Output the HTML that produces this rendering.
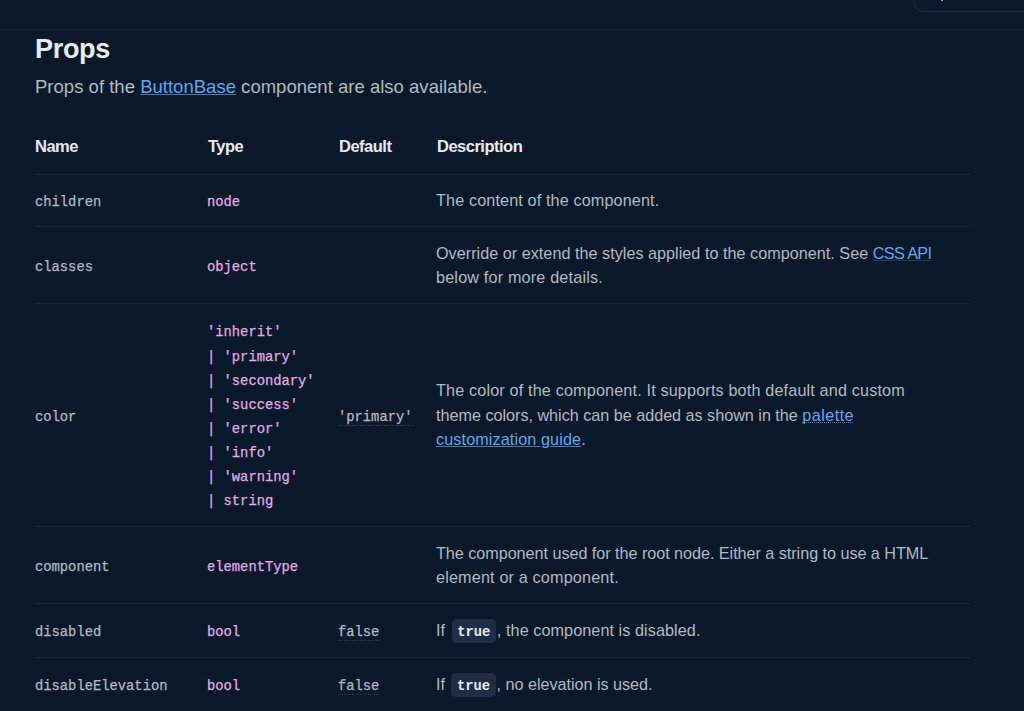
<!DOCTYPE html>
<html><head><meta charset="utf-8"><title>Props</title>
<style>
html,body{margin:0;padding:0;}
body{width:1024px;height:711px;overflow:hidden;background:#0A1929;position:relative;font-family:"Liberation Sans",sans-serif;}
.t{position:absolute;white-space:nowrap;}
.hr{position:absolute;left:35px;width:935px;height:1px;background:#172536;}
.topline{position:absolute;left:0;top:29px;width:1024px;height:1px;background:#142233;}
.box{position:absolute;left:913px;top:-41px;width:200px;height:51px;border:1px solid #1E2C3C;border-radius:11px;}
.bdot{position:absolute;left:941px;top:0;width:2px;height:1px;background:#66B2FF;}
.lk{color:#5EA8F2;text-decoration:underline;text-decoration-color:rgba(94,168,242,0.7);text-underline-offset:1px;}
.dim{text-decoration-color:rgba(160,190,230,0.2);}
.dotl{text-decoration:none;background-image:repeating-linear-gradient(90deg,rgba(94,168,242,0.65) 0 1px,transparent 1px 2px);background-repeat:no-repeat;background-size:100% 1px;background-position:0 16px;}
.dot{border-bottom:1px dotted rgba(178,186,194,0.24);}
.chip{display:inline-block;font-family:"Liberation Mono",monospace;font-weight:700;font-size:13.8px;color:#E7EBF0;background:#1F2E44;border-radius:5px;padding:4px 5.5px 0 5.5px;line-height:20px;height:20px;vertical-align:baseline;margin:0 1px 0 2px;letter-spacing:0;}
</style></head><body>
<div class="topline"></div>
<div class="box"></div><div class="bdot"></div>
<div class="hr" style="top:174px"></div><div class="hr" style="top:226px"></div><div class="hr" style="top:303px"></div><div class="hr" style="top:526px"></div><div class="hr" style="top:603px"></div><div class="hr" style="top:657px"></div>
<div class="t" style="left:35px;top:29px;font-size:27px;line-height:40px;color:#E7EBF0;font-family:'Liberation Sans', sans-serif;font-weight:700;letter-spacing:-0.3px;">Props</div><div class="t" style="left:35px;top:73px;font-size:18.5px;line-height:28px;color:#B2BAC2;font-family:'Liberation Sans', sans-serif;font-weight:400;letter-spacing:0.0173px;">Props of the <span class="lk">ButtonBase</span> component are also available.</div><div class="t" style="left:35px;top:134px;font-size:16.5px;line-height:25px;color:#E7EBF0;font-family:'Liberation Sans', sans-serif;font-weight:700;letter-spacing:-0.5px;">Name</div><div class="t" style="left:208px;top:134px;font-size:16.5px;line-height:25px;color:#E7EBF0;font-family:'Liberation Sans', sans-serif;font-weight:700;letter-spacing:-0.5px;">Type</div><div class="t" style="left:339px;top:134px;font-size:16.5px;line-height:25px;color:#E7EBF0;font-family:'Liberation Sans', sans-serif;font-weight:700;letter-spacing:-0.5px;">Default</div><div class="t" style="left:437px;top:134px;font-size:16.5px;line-height:25px;color:#E7EBF0;font-family:'Liberation Sans', sans-serif;font-weight:700;letter-spacing:-0.5px;">Description</div><div class="t" style="left:35px;top:192px;font-size:13.8px;line-height:21px;color:#B2BAC2;font-family:'Liberation Mono', monospace;font-weight:400;-webkit-text-stroke:0.25px;">children</div><div class="t" style="left:207px;top:192px;font-size:13.8px;line-height:21px;color:#E3ACE6;font-family:'Liberation Mono', monospace;font-weight:400;-webkit-text-stroke:0.25px;">node</div><div class="t" style="left:436px;top:188px;font-size:16.2px;line-height:24px;color:#B2BAC2;font-family:'Liberation Sans', sans-serif;font-weight:400;letter-spacing:0.1286px;">The content of the component.</div><div class="t" style="left:35px;top:257px;font-size:13.8px;line-height:21px;color:#B2BAC2;font-family:'Liberation Mono', monospace;font-weight:400;-webkit-text-stroke:0.25px;">classes</div><div class="t" style="left:207px;top:257px;font-size:13.8px;line-height:21px;color:#E3ACE6;font-family:'Liberation Mono', monospace;font-weight:400;-webkit-text-stroke:0.25px;">object</div><div class="t" style="left:436px;top:241px;font-size:16.2px;line-height:24px;color:#B2BAC2;font-family:'Liberation Sans', sans-serif;font-weight:400;letter-spacing:0.0205px;">Override or extend the styles applied to the component. See <span class="lk dim" style="letter-spacing:-0.62px">CSS API</span></div><div class="t" style="left:436px;top:265px;font-size:16.2px;line-height:24px;color:#B2BAC2;font-family:'Liberation Sans', sans-serif;font-weight:400;letter-spacing:0.1759px;">below for more details.</div><div class="t" style="left:35px;top:407px;font-size:13.8px;line-height:21px;color:#B2BAC2;font-family:'Liberation Mono', monospace;font-weight:400;-webkit-text-stroke:0.25px;">color</div><div class="t" style="left:207px;top:322px;font-size:13.8px;line-height:21px;color:#E3ACE6;font-family:'Liberation Mono', monospace;font-weight:400;-webkit-text-stroke:0.25px;">'inherit'</div><div class="t" style="left:207px;top:346.5px;font-size:13.8px;line-height:21px;color:#E3ACE6;font-family:'Liberation Mono', monospace;font-weight:400;-webkit-text-stroke:0.25px;">|&nbsp;'primary'</div><div class="t" style="left:207px;top:370.6px;font-size:13.8px;line-height:21px;color:#E3ACE6;font-family:'Liberation Mono', monospace;font-weight:400;-webkit-text-stroke:0.25px;">|&nbsp;'secondary'</div><div class="t" style="left:207px;top:394.6px;font-size:13.8px;line-height:21px;color:#E3ACE6;font-family:'Liberation Mono', monospace;font-weight:400;-webkit-text-stroke:0.25px;">|&nbsp;'success'</div><div class="t" style="left:207px;top:419px;font-size:13.8px;line-height:21px;color:#E3ACE6;font-family:'Liberation Mono', monospace;font-weight:400;-webkit-text-stroke:0.25px;">|&nbsp;'error'</div><div class="t" style="left:207px;top:443px;font-size:13.8px;line-height:21px;color:#E3ACE6;font-family:'Liberation Mono', monospace;font-weight:400;-webkit-text-stroke:0.25px;">|&nbsp;'info'</div><div class="t" style="left:207px;top:467px;font-size:13.8px;line-height:21px;color:#E3ACE6;font-family:'Liberation Mono', monospace;font-weight:400;-webkit-text-stroke:0.25px;">|&nbsp;'warning'</div><div class="t" style="left:207px;top:491px;font-size:13.8px;line-height:21px;color:#E3ACE6;font-family:'Liberation Mono', monospace;font-weight:400;-webkit-text-stroke:0.25px;">|&nbsp;string</div><div class="t" style="left:338px;top:406.6px;font-size:13.8px;line-height:21px;color:#B2BAC2;font-family:'Liberation Mono', monospace;font-weight:400;-webkit-text-stroke:0.25px;"><span class="dot">'primary'</span></div><div class="t" style="left:436px;top:377.5px;font-size:16.2px;line-height:24px;color:#B2BAC2;font-family:'Liberation Sans', sans-serif;font-weight:400;letter-spacing:0.1582px;">The color of the component. It supports both default and custom</div><div class="t" style="left:436px;top:403px;font-size:16.2px;line-height:24px;color:#B2BAC2;font-family:'Liberation Sans', sans-serif;font-weight:400;letter-spacing:-0.0174px;">theme colors, which can be added as shown in the <span class="lk dotl" style="letter-spacing:0.45px">palette</span></div><div class="t" style="left:436px;top:426.5px;font-size:16.2px;line-height:24px;color:#B2BAC2;font-family:'Liberation Sans', sans-serif;font-weight:400;letter-spacing:0.8763px;"><span class="lk" style="letter-spacing:0.11px">customization guide</span>.</div><div class="t" style="left:35px;top:557px;font-size:13.8px;line-height:21px;color:#B2BAC2;font-family:'Liberation Mono', monospace;font-weight:400;-webkit-text-stroke:0.25px;">component</div><div class="t" style="left:207px;top:557px;font-size:13.8px;line-height:21px;color:#E3ACE6;font-family:'Liberation Mono', monospace;font-weight:400;-webkit-text-stroke:0.25px;">elementType</div><div class="t" style="left:436px;top:540.6px;font-size:16.2px;line-height:24px;color:#B2BAC2;font-family:'Liberation Sans', sans-serif;font-weight:400;letter-spacing:-0.0403px;">The component used for the root node. Either a string to use a HTML</div><div class="t" style="left:436px;top:564.6px;font-size:16.2px;line-height:24px;color:#B2BAC2;font-family:'Liberation Sans', sans-serif;font-weight:400;letter-spacing:0.1636px;">element or a component.</div><div class="t" style="left:35px;top:622px;font-size:13.8px;line-height:21px;color:#B2BAC2;font-family:'Liberation Mono', monospace;font-weight:400;-webkit-text-stroke:0.25px;">disabled</div><div class="t" style="left:207px;top:622px;font-size:13.8px;line-height:21px;color:#E3ACE6;font-family:'Liberation Mono', monospace;font-weight:400;-webkit-text-stroke:0.25px;">bool</div><div class="t" style="left:338px;top:622px;font-size:13.8px;line-height:21px;color:#B2BAC2;font-family:'Liberation Mono', monospace;font-weight:400;-webkit-text-stroke:0.25px;"><span class="dot">false</span></div><div class="t" style="left:436px;top:618px;font-size:16.2px;line-height:24px;color:#B2BAC2;font-family:'Liberation Sans', sans-serif;font-weight:400;letter-spacing:0.0733px;">If <span class="chip">true</span>, the component is disabled.</div><div class="t" style="left:35px;top:675.5px;font-size:13.8px;line-height:21px;color:#B2BAC2;font-family:'Liberation Mono', monospace;font-weight:400;-webkit-text-stroke:0.25px;">disableElevation</div><div class="t" style="left:207px;top:675.5px;font-size:13.8px;line-height:21px;color:#E3ACE6;font-family:'Liberation Mono', monospace;font-weight:400;-webkit-text-stroke:0.25px;">bool</div><div class="t" style="left:338px;top:675.5px;font-size:13.8px;line-height:21px;color:#B2BAC2;font-family:'Liberation Mono', monospace;font-weight:400;-webkit-text-stroke:0.25px;"><span class="dot">false</span></div><div class="t" style="left:436px;top:672px;font-size:16.2px;line-height:24px;color:#B2BAC2;font-family:'Liberation Sans', sans-serif;font-weight:400;letter-spacing:-0.0286px;">If <span class="chip">true</span>, no elevation is used.</div>
</body></html>
